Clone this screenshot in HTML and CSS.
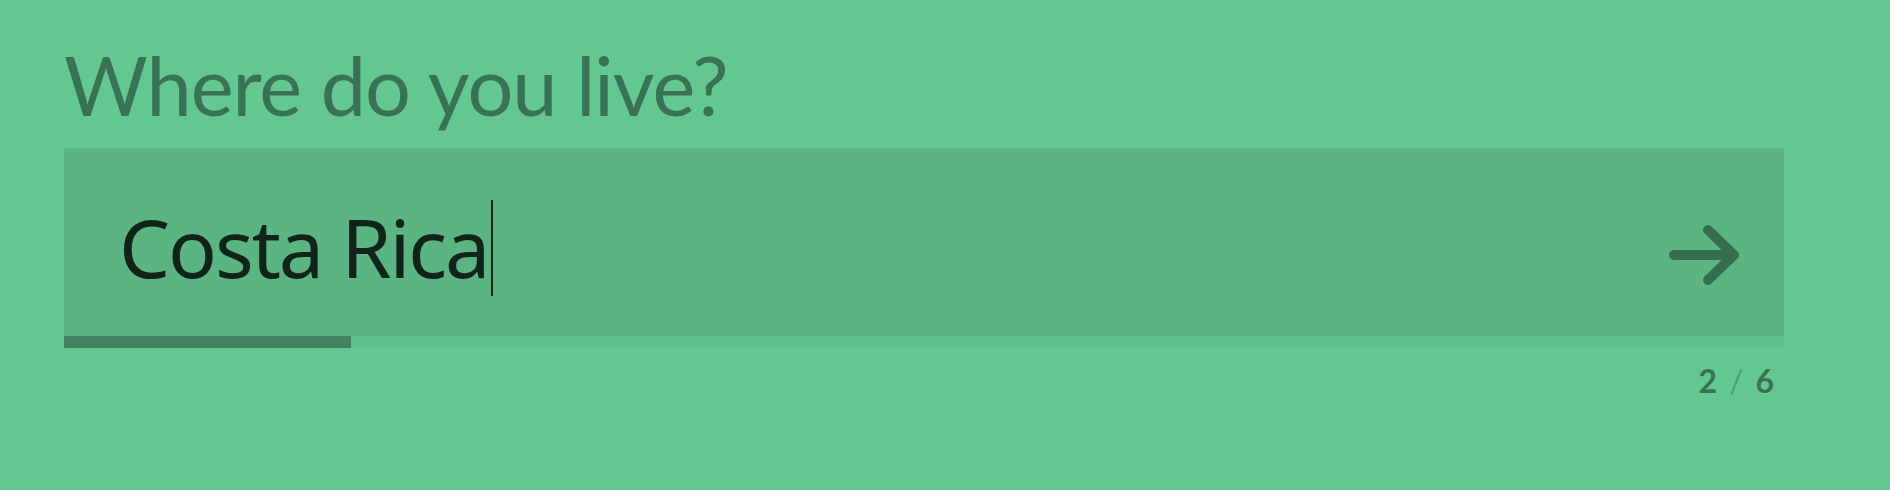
FILE: index.html
```html
<!DOCTYPE html>
<html lang="en">
<head>
<meta charset="utf-8">
<title>Where do you live?</title>
<link rel="stylesheet" href="styles.css">
</head>
<body>
<main class="page">
  <h1 class="question">Where do you live?</h1>
  <div class="field">
    <div class="field-row">
      <div class="answer"><span class="answer-text">Costa Rica</span><span class="caret"></span></div>
      <button class="next" type="button" aria-label="Next">
        <svg width="80" height="70" viewBox="0 0 80 70" aria-hidden="true">
          <path d="M10 35 H70 M44 10 L70 35 L44 60" fill="none" stroke="#376e4f" stroke-width="10" stroke-linecap="round" stroke-linejoin="round"/>
        </svg>
      </button>
    </div>
    <div class="progress"><div class="progress-fill" style="width: 16.667%"></div></div>
  </div>
  <div class="counter"><span class="num">2</span><span class="sep">/</span><span class="num">6</span></div>
</main>
</body>
</html>
```
FILE: styles.css
```css
html, body {
  margin: 0;
  padding: 0;
  background: #63c88f;
}
body {
  width: 1890px;
  height: 490px;
  overflow: hidden;
}
.page {
  padding: 45px 106px 0 64px;
}
.question {
  margin: 0 0 23px 0;
  font-family: Lato, "Liberation Sans", sans-serif;
  font-weight: 400;
  font-size: 81px;
  line-height: 80px;
  color: #397254;
  letter-spacing: -1px;
}
.field {
  width: 1720px;
}
.field-row {
  display: flex;
  align-items: flex-start;
  height: 188px;
  background: #5ab583;
}
.answer {
  display: flex;
  align-items: flex-start;
  margin: 58px 0 0 55px;
  font-family: "Noto Sans", "Open Sans", sans-serif;
  font-size: 81px;
  line-height: 81px;
  color: #11241a;
  letter-spacing: -2.1px;
}
.answer-text {
  white-space: pre;
}
.caret {
  width: 2px;
  height: 96px;
  margin: -6px 0 0 3px;
  background: #11241a;
}
.next {
  margin: 72px 40px 0 auto;
  padding: 0;
  border: 0;
  background: none;
  display: block;
  line-height: 0;
}
.progress {
  height: 12px;
  background: #5fc08a;
}
.progress-fill {
  height: 100%;
  background: #428260;
}
.counter {
  width: 1710px;
  display: flex;
  justify-content: flex-end;
  gap: 12px;
  margin-top: 17px;
  font-family: Lato, "Liberation Sans", sans-serif;
  font-weight: 700;
  font-size: 32px;
  line-height: 32px;
  color: #3a7353;
}
.counter .sep {
  color: #4fa070;
  font-weight: 400;
}
```
